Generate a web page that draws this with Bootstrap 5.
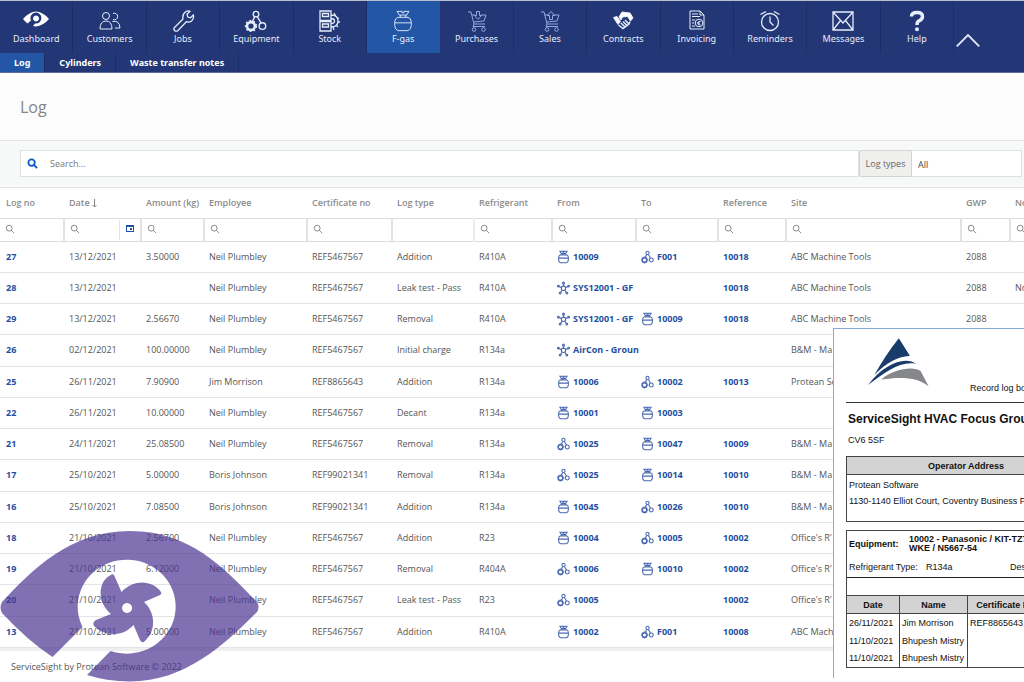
<!DOCTYPE html>
<html lang="en">
<head>
<meta charset="utf-8">
<meta name="viewport" content="width=device-width, initial-scale=1">
<title>ServiceSight - F-gas log</title>
<link href="https://cdn.jsdelivr.net/npm/bootstrap@5.3.0/dist/css/bootstrap.min.css" rel="stylesheet">
<style>
:root{--navy:#233675;--blue:#2456a6;--link:#1f4fa0;--line:#e3e4e5}
body{font-family:"Open Sans","Noto Sans",sans-serif;font-size:9px;line-height:12px;color:#555;background:#fff}
.app{min-height:100vh;overflow:hidden}
svg{display:block}
.ico{fill:none;stroke:currentColor}
.topbar{background:var(--navy);border-top:1px solid #b4bfd0;border-bottom:1px solid #5f6d9b}
.mainnav a{flex:1 1 0;color:#e6edfb;font:9px/12px "Noto Sans",sans-serif;height:52px;padding-top:9px;border-right:1px solid #1d2d66;text-decoration:none}
.mainnav a.active{background:var(--blue);border-color:var(--blue)}
.mainnav svg{width:26px;height:22px;margin-bottom:1px}
.mainnav .soft{color:#93a9e0}
.collapser{width:70px;padding:28px 0 0 1px;color:#dfe8fa;background:none;border:0}
.subnav a{color:#fff;font:bold 9px/19px "Noto Sans",sans-serif;padding:0 14px;text-decoration:none;border-right:1px solid #1d2d66}
.subnav a.active{background:var(--blue)}
.titlebar{background:#fcfcfc;height:68px;padding:0 20px;border-bottom:1px solid var(--line)}
.titlebar h1{font-size:16px;line-height:20px;color:#868686;margin:0}
.filterbar{background:#f7f8f8;padding:9px 2px 10px 20px;border-bottom:1px solid var(--line)}
.searchbox{background:#fff;border:1px solid #dfe1e1;height:27px;padding-left:6px}
.searchbox input,.colfilter input{border:0;outline:0;background:transparent;font-size:inherit;color:#666;min-width:0}
.searchbox input::placeholder{color:#777}
.typelabel{background:#efefed;border:1px solid #d4d4d4;border-radius:2px 0 0 2px;width:53px;height:27px;color:#666}
.typeselect{appearance:none;width:110px;border:1px solid #dfe1e1;border-left:0;background:#fff;padding:3px 6px 0;font-size:9px;color:#444;border-radius:0}
.logtable{table-layout:fixed;width:calc(100% + 70px);border-collapse:collapse}
.logtable th{height:30px;padding:0 0 0 5px;font-weight:600;color:#8b8b8b;white-space:nowrap}
.logtable th,.logtable td{vertical-align:middle}
.logtable .colfilter td{height:23px;padding:0;border-top:1px solid #dcdcdc;border-bottom:1px solid #dcdcdc;border-right:2px solid #e2e2e2}
.logtable .colfilter td.nofilter{border-right-color:#ececec}
.colfilter label{display:flex;align-items:center;padding:0 0 2px 5px;color:#777}
.colfilter input{width:60%}
.calbtn{border:0;border-left:1px solid var(--line);background:none;height:20px;width:22px;padding:0 6px 4px;margin-left:auto;color:var(--link)}
.logtable tbody td{height:31px;padding:0 0 0 5px;border-bottom:1px solid var(--line);white-space:nowrap;overflow:hidden}
.logtable tbody tr:nth-child(4n) td{height:32px}
.logtable tbody td:first-child,.logtable th:first-child{padding-left:6px}
.logtable a{color:var(--link);font-weight:700;text-decoration:none}
.logtable td a.unit{display:flex;align-items:center;gap:3px}
.sortarrow{width:5px;height:9px}
.unit svg{width:13px;height:14px;flex:none;stroke:#4a69b0}
.foot{border-top:3px solid #efefef;padding:10px 11px;font-size:9px}
.eye{position:absolute;left:0;top:530px;width:260px;height:152px;opacity:.7;pointer-events:none}
.report{position:absolute;right:0;top:328px;width:191px;height:350px;overflow:hidden;background:#fff;border:1px solid #87abd9;border-width:1px 0 0 1px;color:#111;font:9px/12px "Liberation Sans",Arial,sans-serif}
.sheet{width:252px;padding:0 0 0 12px}
.sheet header{height:74px;border-bottom:1px solid #333}
.sheet header svg{width:63px;height:50px;margin:8px 0 0 21px}
.sheet h2{font-size:12px;line-height:14px;font-weight:700;margin:9px 0 0 2px;white-space:nowrap}
.sheet p{margin:8px 0 10px 2px}
.sheet table{width:240px;table-layout:fixed;border-collapse:collapse}
.sheet .boxed{border:1px solid #444}
.sheet th{background:#d3d3d3;text-align:center;border:1px solid #444;padding:0;height:18px}
.sheet td{padding:0 2px}
.equip{border:1px solid #444;border-bottom:0;height:65px;width:240px}
.equip>div{padding:4px 2px}
.visits td{border:solid #444;border-width:0 1px;height:18px}
</style>
</head>
<body>
<svg width="0" height="0" class="position-absolute" aria-hidden="true">
 <symbol id="cyl" viewBox="0 0 24 24"><path d="M5.500 1.500H11v1.500h2V1.500h5.500L16 5.500H8zM9 5.500v2.500M15 5.500v2.500M6.500 8h11q3.500 1 3.500 5V17q0 4-3.500 5.500h-11Q3 21 3 17v-4q0-4 3.500-5zM3 14h18"/></symbol>
 <symbol id="eq" viewBox="0 0 24 24"><circle cx="12" cy="4.500" r="3"/><path d="M10.500 7.500L8 12.500M13.500 7.500l4 6.500"/><circle cx="6.500" cy="17.500" r="4.300" stroke-width="2.800"/><circle cx="6.500" cy="17.500" r="6" stroke-width="1.500" stroke-dasharray="2 2.300"/><circle cx="19" cy="17.500" r="3.600"/></symbol>
 <symbol id="sys" viewBox="0 0 24 24"><circle cx="12" cy="12.500" r="4"/><path d="M12 5v3.500M8 11L3 9M16 11l5-2M9.500 16L6.500 20.500M14.500 16l3 4.500"/><circle cx="12" cy="3" r="1.800"/><circle cx="2.500" cy="8.500" r="1.600"/><circle cx="21.500" cy="8.500" r="1.600"/><circle cx="5.800" cy="21.500" r="1.600"/><circle cx="18.200" cy="21.500" r="1.600"/></symbol>
 <symbol id="mag" viewBox="0 0 12 12"><circle cx="5" cy="5" r="3.500"/><path d="M7.500 7.500L11 11"/></symbol>
 <symbol id="cart" viewBox="0 0 26 22"><path d="M4 2h3l3 12h11M8 5h3M17 5h5l-2 6-10 1M10 14l-1 2.500h12"/><circle cx="10" cy="19.500" r="1.800"/><circle cx="19.500" cy="19.500" r="1.800"/></symbol>
</svg>
<div class="app position-relative">
<header class="topbar">
 <nav class="mainnav d-flex" aria-label="Main">
  <a class="text-center" href="#"><svg class="ico mx-auto" viewBox="0 0 26 22"><path fill="#fff" stroke="none" fill-rule="evenodd" d="M0 9Q13-6 26 9 20 16 13 16.500L10 16l2-2.500a5.500 5.500 0 1 0-4-3L4.500 13.500Q2 11.500 0 9zM13 5.500a3 3 0 1 0 .1 0z"/></svg>Dashboard</a>
  <a class="text-center" href="#"><svg class="ico mx-auto" viewBox="0 0 26 22"><circle cx="9" cy="6" r="3.500"/><path d="M3 19q0-8 6-8t6 8zM16 3.500a3.300 3.300 0 1 1 0 6M15.500 11.500q7-1.500 7.500 6.500h-5"/></svg>Customers</a>
  <a class="text-center" href="#"><svg class="ico mx-auto" viewBox="0 0 26 22"><path stroke-width="1.300" d="M4.500 17.500l8.500-8.500q-1-5 3-7.500 2-1 4-.2l-3 3 .8 2.700 2.700.8 2.800-2.800q1 3.500-1.700 6-2.500 1.700-5.300.7l-8.500 9q-1.800 1-3.200-.3t-.1-2.900z"/></svg>Jobs</a>
  <a class="text-center" href="#"><svg class="ico mx-auto" stroke-width="1.500"><use href="#eq"/></svg>Equipment</a>
  <a class="text-center" href="#"><svg class="ico mx-auto" viewBox="0 0 26 22" stroke-width="1.300"><path d="M3 1h11v9.500H3zM3 11.500h11V21H3zM5.500 3.500h6v3h-6zM5.500 14h6v3h-6zM14 5q7 0 7 6t-7 6M14 8.500q3.500 0 3.500 2.500T14 13.500M17 3l1.500 2.500M22 8l-2 1M23 12h-2M21 17l-2-2M17 20l-1-3"/></svg>Stock</a>
  <a class="text-center active" href="#" aria-current="page"><svg class="ico mx-auto"><use href="#cyl"/></svg>F-gas</a>
  <a class="text-center" href="#"><svg class="ico soft mx-auto" viewBox="0 0 26 22"><use href="#cart"/><path d="M12.500 1.500h3v4h2L14 9.500 10.500 5.500h2z"/></svg>Purchases</a>
  <a class="text-center" href="#"><svg class="ico soft mx-auto" viewBox="0 0 26 22"><use href="#cart"/><path d="M12.500 9.500h3v-4h2L14 1.500 10.500 5.500h2z"/></svg>Sales</a>
  <a class="text-center" href="#"><svg class="ico mx-auto" viewBox="0 0 26 22"><path fill="#fff" d="M9 7l3-5 8 1 3 5-2.500 3-3-4.500-5 .500-1.500 3z"/><path fill="#fff" d="M3.500 7.500l3.500-1 3.500 5-2.500 3z"/><path stroke-width="1.500" d="M8.500 15l4.500 3.500 6-4.500 1-2.500M11 13l4 4M13 11.500l4 4M15 10l3.500 3.500"/></svg>Contracts</a>
  <a class="text-center" href="#"><svg class="ico mx-auto" viewBox="0 0 26 22"><path d="M6 1h10l4 4v14H6zM16 1v4h4M8 4h6M8 6.500h8M8 10h3M8 13h2M8 16h3"/><circle cx="15" cy="13" r="3.800"/><path d="M16.500 11.500q-2-1-2.500 1.500t2.500 2M13 13h3"/></svg>Invoicing</a>
  <a class="text-center" href="#"><svg class="ico mx-auto" viewBox="0 0 26 22" stroke-width="1.300"><circle cx="13" cy="12" r="8.500"/><path d="M13 6.500V12l3.500 3.500M3.500 4.500L9 1.500M17 1.500l5.500 3"/></svg>Reminders</a>
  <a class="text-center" href="#"><svg class="ico mx-auto" viewBox="0 0 26 22" stroke-width="1.300"><path d="M3 2h20v18H3zM3 2l10 11L23 2M3 20l7.500-9.500M23 20l-7.500-9.500"/></svg>Messages</a>
  <a class="text-center" href="#"><svg class="ico mx-auto" viewBox="0 0 26 22" stroke-width="3.500"><path d="M7.500 6.500q0-4 5.500-4t5.500 4q0 3-3.500 4.300-2 1-2 4.200"/><circle cx="13" cy="19.300" r="1" stroke-width="2"/></svg>Help</a>
  <button class="collapser" type="button" aria-label="Collapse menu"><svg class="ico" width="22" height="14" viewBox="0 0 22 14" stroke-width="1.600"><path d="M1.500 11.500L11 2l9.500 9.500"/></svg></button>
 </nav>
 <nav class="subnav d-flex" aria-label="F-gas"><a class="active" href="#">Log</a><a href="#">Cylinders</a><a href="#">Waste transfer notes</a></nav>
</header>
<main>
 <div class="titlebar d-flex align-items-center"><h1>Log</h1></div>
 <div class="filterbar d-flex">
  <label class="searchbox d-flex align-items-center flex-grow-1 gap-2"><svg class="ico me-1 text-primary-emphasis" width="11" height="11" stroke-width="2"><use href="#mag"/></svg><input class="flex-grow-1 p-0" type="text" placeholder="Search..." aria-label="Search"></label>
  <label class="typelabel d-flex align-items-center justify-content-center" for="types">Log types</label>
  <select class="typeselect" id="types"><option>All</option></select>
 </div>
 <div class="overflow-hidden">
 <table class="logtable">
  <colgroup><col style="width:64px"><col style="width:77px"><col style="width:63px"><col style="width:103px"><col style="width:85px"><col style="width:82px"><col style="width:78px"><col style="width:84px"><col style="width:82px"><col style="width:68px"><col><col style="width:49px"><col style="width:83px"></colgroup>
  <thead>
   <tr><th>Log no</th><th>Date <svg class="ico sortarrow d-inline" viewBox="0 0 5 9"><path d="M2.500 0v8M.5 6l2 2 2-2"/></svg></th><th>Amount (kg)</th><th>Employee</th><th>Certificate no</th><th>Log type</th><th>Refrigerant</th><th>From</th><th>To</th><th>Reference</th><th>Site</th><th>GWP</th><th>Notes</th></tr>
   <tr class="colfilter">
    <td><label><svg class="ico" width="10" height="10"><use href="#mag"/></svg><input type="text" aria-label="Filter log no"></label></td>
    <td><div class="d-flex align-items-center"><label class="flex-grow-1"><svg class="ico flex-shrink-0" width="10" height="10"><use href="#mag"/></svg><input type="text" aria-label="Filter date"></label><button class="calbtn" type="button" aria-label="Pick date"><svg width="8" height="8" viewBox="0 0 8 8"><path fill="currentColor" fill-rule="evenodd" d="M0 1h8v7H0zM1 3v4h6V3zM4 4h2v2H4z"/></svg></button></div></td>
    <td><label><svg class="ico" width="10" height="10"><use href="#mag"/></svg><input type="text" aria-label="Filter amount"></label></td>
    <td><label><svg class="ico" width="10" height="10"><use href="#mag"/></svg><input type="text" aria-label="Filter employee"></label></td>
    <td><label><svg class="ico" width="10" height="10"><use href="#mag"/></svg><input type="text" aria-label="Filter certificate"></label></td>
    <td class="nofilter"></td>
    <td><label><svg class="ico" width="10" height="10"><use href="#mag"/></svg><input type="text" aria-label="Filter refrigerant"></label></td>
    <td><label><svg class="ico" width="10" height="10"><use href="#mag"/></svg><input type="text" aria-label="Filter from"></label></td>
    <td><label><svg class="ico" width="10" height="10"><use href="#mag"/></svg><input type="text" aria-label="Filter to"></label></td>
    <td><label><svg class="ico" width="10" height="10"><use href="#mag"/></svg><input type="text" aria-label="Filter reference"></label></td>
    <td><label><svg class="ico" width="10" height="10"><use href="#mag"/></svg><input type="text" aria-label="Filter site"></label></td>
    <td><label><svg class="ico" width="10" height="10"><use href="#mag"/></svg><input type="text" aria-label="Filter GWP"></label></td>
    <td><label><svg class="ico" width="10" height="10"><use href="#mag"/></svg><input type="text" aria-label="Filter notes"></label></td>
   </tr>
  </thead>
  <tbody>
   <tr><td><a href="#">27</a></td><td>13/12/2021</td><td>3.50000</td><td>Neil Plumbley</td><td>REF5467567</td><td>Addition</td><td>R410A</td><td><a class="unit" href="#"><svg class="ico" stroke-width="2"><use href="#cyl"/></svg>10009</a></td><td><a class="unit" href="#"><svg class="ico" stroke-width="2"><use href="#eq"/></svg>F001</a></td><td><a href="#">10018</a></td><td>ABC Machine Tools</td><td>2088</td><td></td></tr>
   <tr><td><a href="#">28</a></td><td>13/12/2021</td><td></td><td>Neil Plumbley</td><td>REF5467567</td><td>Leak test - Pass</td><td>R410A</td><td><a class="unit" href="#"><svg class="ico" stroke-width="2"><use href="#sys"/></svg>SYS12001 - GF</a></td><td></td><td><a href="#">10018</a></td><td>ABC Machine Tools</td><td>2088</td><td>No leaks</td></tr>
   <tr><td><a href="#">29</a></td><td>13/12/2021</td><td>2.56670</td><td>Neil Plumbley</td><td>REF5467567</td><td>Removal</td><td>R410A</td><td><a class="unit" href="#"><svg class="ico" stroke-width="2"><use href="#sys"/></svg>SYS12001 - GF</a></td><td><a class="unit" href="#"><svg class="ico" stroke-width="2"><use href="#cyl"/></svg>10009</a></td><td><a href="#">10018</a></td><td>ABC Machine Tools</td><td>2088</td><td></td></tr>
   <tr><td><a href="#">26</a></td><td>02/12/2021</td><td>100.00000</td><td>Neil Plumbley</td><td>REF5467567</td><td>Initial charge</td><td>R134a</td><td class="overflow-visible"><a class="unit" href="#"><svg class="ico" stroke-width="2"><use href="#sys"/></svg>AirCon - Groun</a></td><td></td><td></td><td>B&amp;M - Ma</td><td></td><td></td></tr>
   <tr><td><a href="#">25</a></td><td>26/11/2021</td><td>7.90900</td><td>Jim Morrison</td><td>REF8865643</td><td>Addition</td><td>R134a</td><td><a class="unit" href="#"><svg class="ico" stroke-width="2"><use href="#cyl"/></svg>10006</a></td><td><a class="unit" href="#"><svg class="ico" stroke-width="2"><use href="#eq"/></svg>10002</a></td><td><a href="#">10013</a></td><td>Protean So</td><td></td><td></td></tr>
   <tr><td><a href="#">22</a></td><td>26/11/2021</td><td>10.00000</td><td>Neil Plumbley</td><td>REF5467567</td><td>Decant</td><td>R134a</td><td><a class="unit" href="#"><svg class="ico" stroke-width="2"><use href="#cyl"/></svg>10001</a></td><td><a class="unit" href="#"><svg class="ico" stroke-width="2"><use href="#cyl"/></svg>10003</a></td><td></td><td></td><td></td><td></td></tr>
   <tr><td><a href="#">21</a></td><td>24/11/2021</td><td>25.08500</td><td>Neil Plumbley</td><td>REF5467567</td><td>Removal</td><td>R134a</td><td><a class="unit" href="#"><svg class="ico" stroke-width="2"><use href="#eq"/></svg>10025</a></td><td><a class="unit" href="#"><svg class="ico" stroke-width="2"><use href="#cyl"/></svg>10047</a></td><td><a href="#">10009</a></td><td>B&amp;M - Ma</td><td></td><td></td></tr>
   <tr><td><a href="#">17</a></td><td>25/10/2021</td><td>5.00000</td><td>Boris Johnson</td><td>REF99021341</td><td>Removal</td><td>R134a</td><td><a class="unit" href="#"><svg class="ico" stroke-width="2"><use href="#eq"/></svg>10025</a></td><td><a class="unit" href="#"><svg class="ico" stroke-width="2"><use href="#cyl"/></svg>10014</a></td><td><a href="#">10010</a></td><td>B&amp;M - Ma</td><td></td><td></td></tr>
   <tr><td><a href="#">16</a></td><td>25/10/2021</td><td>7.08500</td><td>Boris Johnson</td><td>REF99021341</td><td>Addition</td><td>R134a</td><td><a class="unit" href="#"><svg class="ico" stroke-width="2"><use href="#cyl"/></svg>10045</a></td><td><a class="unit" href="#"><svg class="ico" stroke-width="2"><use href="#eq"/></svg>10026</a></td><td><a href="#">10010</a></td><td>B&amp;M - Ma</td><td></td><td></td></tr>
   <tr><td><a href="#">18</a></td><td>21/10/2021</td><td>2.56700</td><td>Neil Plumbley</td><td>REF5467567</td><td>Addition</td><td>R23</td><td><a class="unit" href="#"><svg class="ico" stroke-width="2"><use href="#cyl"/></svg>10004</a></td><td><a class="unit" href="#"><svg class="ico" stroke-width="2"><use href="#eq"/></svg>10005</a></td><td><a href="#">10002</a></td><td>Office's R'</td><td></td><td></td></tr>
   <tr><td><a href="#">19</a></td><td>21/10/2021</td><td>6.12000</td><td>Neil Plumbley</td><td>REF5467567</td><td>Removal</td><td>R404A</td><td><a class="unit" href="#"><svg class="ico" stroke-width="2"><use href="#eq"/></svg>10006</a></td><td><a class="unit" href="#"><svg class="ico" stroke-width="2"><use href="#cyl"/></svg>10010</a></td><td><a href="#">10002</a></td><td>Office's R'</td><td></td><td></td></tr>
   <tr><td><a href="#">20</a></td><td>21/10/2021</td><td></td><td>Neil Plumbley</td><td>REF5467567</td><td>Leak test - Pass</td><td>R23</td><td><a class="unit" href="#"><svg class="ico" stroke-width="2"><use href="#eq"/></svg>10005</a></td><td></td><td><a href="#">10002</a></td><td>Office's R'</td><td></td><td></td></tr>
   <tr><td><a href="#">13</a></td><td>21/10/2021</td><td>5.00000</td><td>Neil Plumbley</td><td>REF5467567</td><td>Addition</td><td>R410A</td><td><a class="unit" href="#"><svg class="ico" stroke-width="2"><use href="#cyl"/></svg>10002</a></td><td><a class="unit" href="#"><svg class="ico" stroke-width="2"><use href="#eq"/></svg>F001</a></td><td><a href="#">10008</a></td><td>ABC Machi</td><td></td><td></td></tr>
  </tbody>
 </table>
 </div>
</main>
<footer class="foot">ServiceSight by Protean Software © 2022</footer>

<svg class="eye" viewBox="0 530 260 152" aria-hidden="true"><path fill="#4c3692" fill-rule="evenodd" d="M2 602C32 570 70 531 130 531S224 568 257 602Q260 607 257 612C226 643 186 681.500 130 681.500Q106 681 87 675L110.500 651A49 47 0 1 0 82.500 627L52.500 657Q28 641 2 613Q-1 608 2 602z"/><path fill="#4c3692" fill-rule="evenodd" d="M114 575L121.500 592C135 578 153 581 161 592Q162 594 160 595L144 602C155 612 157 630 145 641Q142 644 140 640L133.500 625C122 638 104 636 94 626Q92 622 96 620L111 614C97 602 98 583 109 576Q113 573 114 575zM127 603a5 5 0 1 0 .1 0z"/></svg>

<aside class="report">
 <div class="sheet">
  <header class="d-flex justify-content-between"><svg viewBox="130 52 188 148"><path fill="#183d6b" d="M225 55L258 107Q200 112 152 165Q185 105 225 55zM133 195C180 130 245 108 276 131C230 122 185 155 133 195z"/><path fill="#85878a" d="M173 178C210 144 272 138 290 153L314 198C280 170 230 170 173 178z"/></svg><span class="align-self-end text-nowrap flex-grow-1 pb-2 ms-4 ps-3">Record log book</span></header>
  <h2>ServiceSight HVAC Focus Group</h2>
  <p>CV6 5SF</p>
  <table class="boxed mb-2"><thead><tr><th>Operator Address</th></tr></thead><tbody><tr><td class="align-top pt-1" style="height:47px"><div>Protean Software</div><div class="text-nowrap pt-1">1130-1140 Elliot Court, Coventry Business Park</div></td></tr></tbody></table>
  <div class="equip">
   <div class="d-flex align-items-center fw-bold text-nowrap"><span style="width:60px">Equipment:</span><span style="line-height:9px">10002 - Panasonic / KIT-TZ71<br>WKE / N5667-54</span></div>
   <div class="d-flex border-bottom border-dark text-nowrap"><span style="width:77px">Refrigerant Type:</span><span style="width:84px">R134a</span><span>Description</span></div>
  </div>
  <table class="visits boxed"><colgroup><col style="width:53px"><col style="width:68px"><col style="width:76px"><col></colgroup>
   <thead><tr><th>Date</th><th>Name</th><th>Certificate No</th><th></th></tr></thead>
   <tbody><tr><td>26/11/2021</td><td>Jim Morrison</td><td>REF8865643</td><td></td></tr><tr><td>11/10/2021</td><td>Bhupesh Mistry</td><td></td><td></td></tr><tr><td>11/10/2021</td><td>Bhupesh Mistry</td><td></td><td></td></tr></tbody>
  </table>
 </div>
</aside>
</div>
<script src="https://cdn.jsdelivr.net/npm/bootstrap@5.3.0/dist/js/bootstrap.bundle.min.js"></script>
</body>
</html>
